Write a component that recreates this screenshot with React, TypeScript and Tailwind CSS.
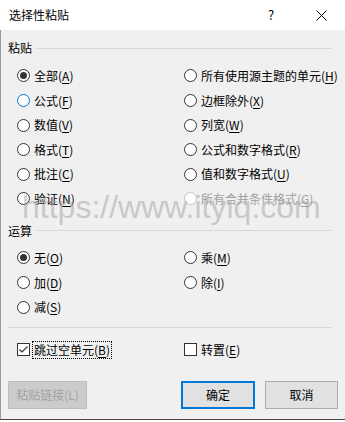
import React from 'react'

type Opt = { text: string; key: string; checked?: boolean; hover?: boolean; disabled?: boolean }

const PASTE_LEFT: Opt[] = [
  { text: '全部', key: 'A', checked: true },
  { text: '公式', key: 'F', hover: true },
  { text: '数值', key: 'V' },
  { text: '格式', key: 'T' },
  { text: '批注', key: 'C' },
  { text: '验证', key: 'N' },
]

const PASTE_RIGHT: Opt[] = [
  { text: '所有使用源主题的单元', key: 'H' },
  { text: '边框除外', key: 'X' },
  { text: '列宽', key: 'W' },
  { text: '公式和数字格式', key: 'R' },
  { text: '值和数字格式', key: 'U' },
  { text: '所有合并条件格式', key: 'G', disabled: true },
]

const OP_LEFT: Opt[] = [
  { text: '无', key: 'O', checked: true },
  { text: '加', key: 'D' },
  { text: '减', key: 'S' },
]

const OP_RIGHT: Opt[] = [
  { text: '乘', key: 'M' },
  { text: '除', key: 'I' },
]

const font = { fontFamily: '"Noto Sans CJK SC", "Noto Sans", sans-serif' }

function Label({ text, k }: { text: string; k: string }) {
  return (
    <span>
      {text}(<span className="underline underline-offset-2">{k}</span>)
    </span>
  )
}

function Radio({ opt }: { opt: Opt }) {
  const border = opt.disabled ? 'border-[#c4c4c4]' : opt.hover ? 'border-[#0078d7]' : 'border-[#333333]'
  return (
    <div className={`h-[24.6px] flex items-center gap-[4px] ${opt.disabled ? 'text-[#a0a0a0]' : 'text-black'}`}>
      <span className={`w-[13px] h-[13px] rounded-full border bg-white flex items-center justify-center shrink-0 ${border}`}>
        {opt.checked && <span className="w-[7px] h-[7px] rounded-full bg-[#333333]" />}
      </span>
      <Label text={opt.text} k={opt.key} />
    </div>
  )
}

function Section({ title }: { title: string }) {
  return (
    <div className="flex items-center h-[16px] px-[7px] gap-[5px]">
      <span className="text-black leading-[16px]">{title}</span>
      <div className="flex-1 h-px bg-[#d7d7d7]" />
    </div>
  )
}

function Columns({ left, right }: { left: Opt[]; right: Opt[] }) {
  return (
    <div className="grid grid-cols-[167px_1fr] pl-[16px]">
      <div className="flex flex-col">
        {left.map((o) => (
          <Radio key={o.key} opt={o} />
        ))}
      </div>
      <div className="flex flex-col">
        {right.map((o) => (
          <Radio key={o.key} opt={o} />
        ))}
      </div>
    </div>
  )
}

export default function App() {
  return (
    <div className="relative w-[345px] h-[422px] overflow-hidden bg-white text-[12px]" style={font}>
      {/* Title bar */}
      <div className="h-[30px] bg-white flex items-center">
        <span className="pl-[9px] text-black text-[12px] flex-1">选择性粘贴</span>
        <span className="w-[20px] text-center text-[13px] text-black mr-[35px]">?</span>
        <svg width="11" height="11" viewBox="0 0 11 11" className="mr-[18px]">
          <path d="M0.5 0.5 L10.5 10.5 M10.5 0.5 L0.5 10.5" stroke="#000" strokeWidth="1" />
        </svg>
      </div>

      {/* Body */}
      <div className="h-[389px] bg-[#f0f0f0] border-l border-[#9a9a9a] pt-[10px] pr-[6px]">
        <Section title="粘贴" />
        <div className="mt-[7.7px]">
          <Columns left={PASTE_LEFT} right={PASTE_RIGHT} />
        </div>
        <div className="mt-[11.7px]">
          <Section title="运算" />
        </div>
        <div className="mt-[6.7px]">
          <Columns left={OP_LEFT} right={OP_RIGHT} />
        </div>
        <div className="mt-[8px] mx-[7px] h-px bg-[#d7d7d7]" />

        {/* Checkboxes */}
        <div className="mt-[12.5px] h-[18px] grid grid-cols-[167px_1fr] pl-[16px]">
          <div className="flex items-center gap-[3px]">
            <span className="w-[13px] h-[13px] border border-[#333333] bg-white flex items-center justify-center">
              <svg width="11" height="11" viewBox="0 0 11 11">
                <path d="M1.5 5.5 L4 8 L9.5 2.5" fill="none" stroke="#333" strokeWidth="1.2" />
              </svg>
            </span>
            <span className="outline-1 outline-dotted outline-black px-px leading-[16px]">
              <Label text="跳过空单元" k="B" />
            </span>
          </div>
          <div className="flex items-center gap-[4px]">
            <span className="w-[13px] h-[13px] border border-[#333333] bg-white" />
            <Label text="转置" k="E" />
          </div>
        </div>

        {/* Buttons */}
        <div className="mt-[22px] flex items-center pl-[7px]">
          <div className="w-[79px] h-[28px] bg-[#cccccc] border border-[#bfbfbf] flex items-center justify-center text-[#a3a3a3]">
            粘贴链接(L)
          </div>
          <div className="ml-[94px] w-[74px] h-[28px] bg-[#e1e1e1] border-2 border-[#0078d7] flex items-center justify-center text-black">
            确定
          </div>
          <div className="ml-[10px] w-[73px] h-[28px] bg-[#e1e1e1] border border-[#adadad] flex items-center justify-center text-black">
            取消
          </div>
        </div>
      </div>
      <div className="h-px bg-[#444444]" />
      <div className="h-[2px] bg-white" />

      {/* Watermark */}
      <div
        className="absolute left-[22px] top-[188px] text-[32px] leading-[38px] text-[#a0a0a0]/50 pointer-events-none whitespace-nowrap"
        style={{ fontFamily: '"Liberation Sans", Arial, sans-serif' }}
      >
        https://www.ityiq.com
      </div>
    </div>
  )
}
